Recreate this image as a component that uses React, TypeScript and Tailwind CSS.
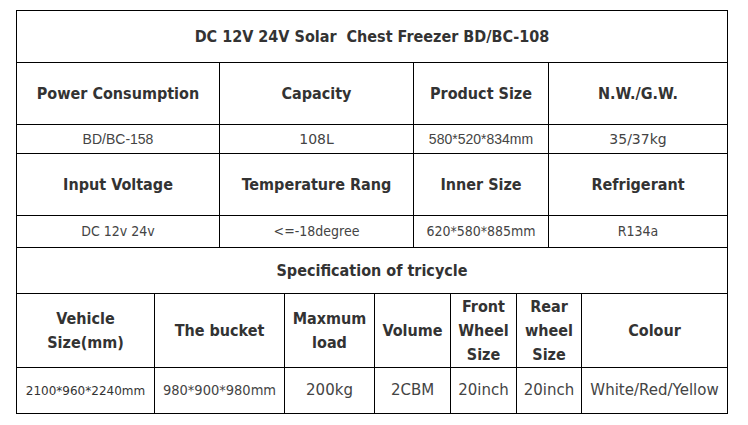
import React from "react";

const B = "font-['DejaVu_Sans_Condensed','DejaVu_Sans',sans-serif] font-bold text-[16px] text-[#333]";

function Cell({ w, last, children, cls = "" }: { w: string; last?: boolean; children: React.ReactNode; cls?: string }) {
  return (
    <div className={`${w} shrink-0 flex items-center justify-center text-center ${last ? "" : "border-r border-black"} ${cls}`}>
      {children}
    </div>
  );
}

export default function App() {
  const V = "font-['DejaVu_Sans',sans-serif] text-[14px] text-[#444]";
  const V15 = "font-['DejaVu_Sans',sans-serif] text-[15px] text-[#444]";
  const T = "font-['DejaVu_Sans_Condensed','DejaVu_Sans',sans-serif] text-[14px] text-[#444]";
  const A = "font-['Liberation_Sans',Arial,sans-serif] text-[14px] text-[#444]";
  return (
    <div className="w-[748px] h-[425px] bg-white pt-[10px] pl-[16px]">
      <div className="w-[712px] border border-black">
        <div className={`h-[52px] border-b border-black flex items-center justify-center ${B}`}>
          DC 12V 24V Solar&nbsp; Chest Freezer BD/BC-108
        </div>
        <div className={`h-[62px] border-b border-black flex ${B}`}>
          <Cell w="w-[203px]">Power Consumption</Cell>
          <Cell w="w-[194px]">Capacity</Cell>
          <Cell w="w-[135px]">Product Size</Cell>
          <Cell w="w-[178px]" last>N.W./G.W.</Cell>
        </div>
        <div className="h-[29px] border-b border-black flex">
          <Cell w="w-[203px]" cls={A}>BD/BC-158</Cell>
          <Cell w="w-[194px]" cls={V}>108L</Cell>
          <Cell w="w-[135px]" cls={A}>580*520*834mm</Cell>
          <Cell w="w-[178px]" last cls={V}>35/37kg</Cell>
        </div>
        <div className={`h-[62px] border-b border-black flex ${B}`}>
          <Cell w="w-[203px]">Input Voltage</Cell>
          <Cell w="w-[194px]">Temperature Rang</Cell>
          <Cell w="w-[135px]">Inner Size</Cell>
          <Cell w="w-[178px]" last>Refrigerant</Cell>
        </div>
        <div className="h-[32px] border-b border-black flex">
          <Cell w="w-[203px]" cls={T}>DC 12v 24v</Cell>
          <Cell w="w-[194px]" cls={T}>&lt;=-18degree</Cell>
          <Cell w="w-[135px]" cls={T}>620*580*885mm</Cell>
          <Cell w="w-[178px]" last cls={T}>R134a</Cell>
        </div>
        <div className={`h-[46px] border-b border-black flex items-center justify-center ${B}`}>
          Specification of tricycle
        </div>
        <div className={`h-[74px] border-b border-black flex leading-[24px] ${B}`}>
          <Cell w="w-[138px]">Vehicle<br />Size(mm)</Cell>
          <Cell w="w-[130px]">The bucket</Cell>
          <Cell w="w-[90px]">Maxmum<br />load</Cell>
          <Cell w="w-[76px]">Volume</Cell>
          <Cell w="w-[66px]">Front<br />Wheel<br />Size</Cell>
          <Cell w="w-[65px]">Rear<br />wheel<br />Size</Cell>
          <Cell w="w-[145px]" last>Colour</Cell>
        </div>
        <div className="h-[45px] flex">
          <Cell w="w-[138px]" cls="font-['DejaVu_Sans',sans-serif] text-[12px] text-[#333]">2100*960*2240mm</Cell>
          <Cell w="w-[130px]" cls="font-['DejaVu_Sans_Condensed','DejaVu_Sans',sans-serif] text-[14.5px] text-[#444]">980*900*980mm</Cell>
          <Cell w="w-[90px]" cls={V15}>200kg</Cell>
          <Cell w="w-[76px]" cls={V15}>2CBM</Cell>
          <Cell w="w-[66px]" cls={V15}>20inch</Cell>
          <Cell w="w-[65px]" cls={V15}>20inch</Cell>
          <Cell w="w-[145px]" last cls={V15}>White/Red/Yellow</Cell>
        </div>
      </div>
    </div>
  );
}
